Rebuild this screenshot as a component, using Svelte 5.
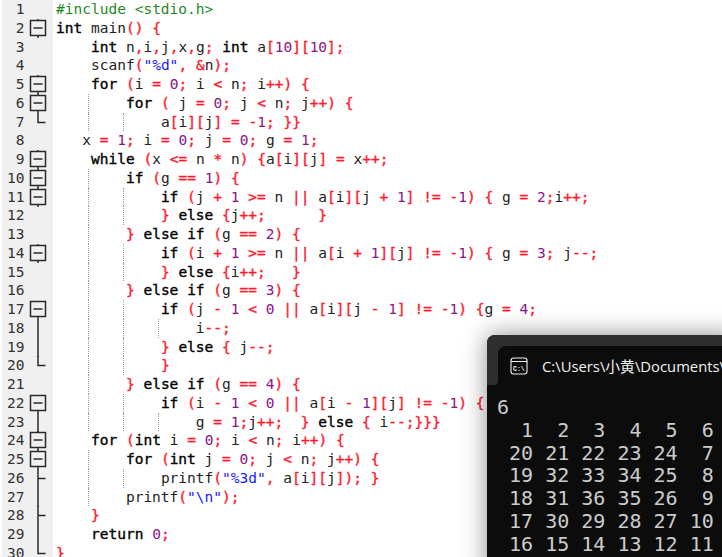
<script lang="ts">
	// source rows: [indent, code, fold, guide columns]
	const source: [number, string, string, number[]][] = [
		[0, '#include <stdio.h>', '', []],
		[0, 'int main() {', 'box', []],
		[4, 'int n,i,j,x,g; int a[10][10];', '', []],
		[4, 'scanf("%d", &n);', '', []],
		[4, 'for (i = 0; i < n; i++) {', 'box', []],
		[8, 'for ( j = 0; j < n; j++) {', 'box', [4]],
		[12, 'a[i][j] = -1; }}', 'end', [4, 8]],
		[3, 'x = 1; i = 0; j = 0; g = 1;', '', []],
		[4, 'while (x <= n * n) {a[i][j] = x++;', 'box', []],
		[8, 'if (g == 1) {', 'box', [4]],
		[12, 'if (j + 1 >= n || a[i][j + 1] != -1) { g = 2;i++;', 'box', [4, 8]],
		[12, '} else {j++;      }', '', [4, 8]],
		[8, '} else if (g == 2) {', '', [4]],
		[12, 'if (i + 1 >= n || a[i + 1][j] != -1) { g = 3; j--;', 'box', [4, 8]],
		[12, '} else {i++;   }', '', [4, 8]],
		[8, '} else if (g == 3) {', '', [4]],
		[12, 'if (j - 1 < 0 || a[i][j - 1] != -1) {g = 4;', 'open', [4, 8]],
		[16, 'i--;', 'line', [4, 8, 12]],
		[12, '} else { j--;', 'line', [4, 8]],
		[12, '}', 'end', [4, 8]],
		[8, '} else if (g == 4) {', '', [4]],
		[12, 'if (i - 1 < 0 || a[i - 1][j] != -1) {', 'open', [4, 8]],
		[16, 'g = 1;j++;  } else { i--;}}}', 'line', [4, 8, 12]],
		[4, 'for (int i = 0; i < n; i++) {', 'box', []],
		[8, 'for (int j = 0; j < n; j++) {', 'box', [4]],
		[12, 'printf("%3d", a[i][j]); }', 'tick', [4, 8]],
		[8, 'printf("\\n");', 'line', [4]],
		[4, '}', 'tick', []],
		[4, 'return 0;', 'line', []],
		[0, '}', 'end', []]
	];

	const charWidth = 8.74;
	const tokenRe = /#include.*|"[^"]*"|\d+|[A-Za-z_]\w*|\s+|./g;
	const keywords = ['int', 'for', 'if', 'else', 'while', 'return'];

	function kind(t: string) {
		if (t.startsWith('#')) return 'inc';
		if (t.startsWith('"')) return 'str';
		if (/^\d/.test(t)) return 'digit';
		if (keywords.includes(t)) return 'kw';
		if (/^[A-Za-z_]/.test(t)) return 'id';
		if (/^\s/.test(t)) return 'sp';
		return 'op';
	}

	const rows = source.map(([indent, code, fold, guides], i) => ({
		n: i + 1,
		indent,
		fold,
		guides,
		tokens: (code.match(tokenRe) ?? []).map((t) => ({ t, k: kind(t) }))
	}));

	const output = [
		'6',
		'  1  2  3  4  5  6',
		' 20 21 22 23 24  7',
		' 19 32 33 34 25  8',
		' 18 31 36 35 26  9',
		' 17 30 29 28 27 10',
		' 16 15 14 13 12 11'
	];
</script>

<main>
	<div class="editor">
		{#each rows as row}
			<div class="row">
				<span class="num">{row.n}</span>
				<svg class="fold" width="24" height="19" viewBox="0 0 24 19">
					{#if row.fold === 'box' || row.fold === 'open'}
						{#if row.fold === 'box'}
							<path d="M12 0V1.5" />
						{/if}
						<rect x="4.5" y="1.5" width="15" height="15" />
						<path d="M7.5 9H16.5M12 16.5V19" />
					{:else if row.fold === 'line'}
						<path d="M12 0V19" />
					{:else if row.fold === 'tick'}
						<path d="M12 0V19M12 9.5H19.5" />
					{:else if row.fold === 'end'}
						<path d="M12 0V9.5H19.5" />
					{/if}
				</svg>
				<div class="line">
					{#each row.guides as g}
						<i class="guide" style="left: {g * charWidth - 2.5}px"></i>
					{/each}
					<code class="text" style="padding-left: {row.indent * charWidth}px">{#each row.tokens as tok}<span class={tok.k}>{tok.t}</span>{/each}</code>
				</div>
			</div>
		{/each}
	</div>

	<section class="terminal">
		<header>
			<div class="tab">
				<svg width="18" height="18" viewBox="0 0 18 18">
					<rect x="1" y="1" width="16" height="16" rx="2.5" />
					<path d="M1 4.5H17" />
					<text x="3" y="13.5">C:\</text>
				</svg>
				<span class="title">C:\Users\小黄\Documents\</span>
			</div>
		</header>
		<pre>{output.join('\n')}</pre>
	</section>
</main>

<style>
	:global(body) {
		margin: 0;
		background: #fff;
	}

	main {
		position: relative;
		width: 722px;
		height: 557px;
		overflow: hidden;
		background: #fff;
	}

	.editor {
		display: flex;
		flex-direction: column;
		margin-left: 2px;
		background: linear-gradient(to right, #f0f0f0 51px, #fff 51px);
		height: 100%;
	}

	.row {
		display: flex;
		flex: none;
		height: 18.75px;
		font: 14.52px/18.75px 'DejaVu Sans Mono', monospace;
	}

	.num {
		width: 22.5px;
		text-align: right;
		color: #333;
	}

	.fold {
		flex: none;
		margin-left: 1px;
		margin-right: 6.5px;
		fill: none;
		stroke: #2a2a2a;
		stroke-width: 1.5;
	}

	.line {
		position: relative;
		flex: 1;
	}

	.text {
		display: block;
		font: inherit;
		white-space: pre;
	}

	.guide {
		position: absolute;
		top: 0;
		bottom: 0;
		border-left: 1px dotted #9a9a9a;
	}

	.kw {
		color: #000;
		-webkit-text-stroke: 0.35px #000;
	}

	.id {
		color: #222;
	}

	.op {
		color: #ff1a2e;
		-webkit-text-stroke: 0.35px #ff1a2e;
	}

	.digit {
		color: #8a148a;
	}

	.str {
		color: #1a1aff;
	}

	.inc {
		color: #1f8a1f;
	}

	.terminal {
		position: absolute;
		left: 487px;
		top: 335px;
		right: -20px;
		bottom: -20px;
		background: #0c0c0c;
		border-radius: 8px 8px 0 0;
		box-shadow: 0 0 24px rgba(0, 0, 0, 0.45);
		overflow: hidden;
	}

	header {
		position: relative;
		background: #2e2e2e;
		padding: 11px 0 0 11px;
	}

	/* small curve where the tab strip meets the console */
	header::after {
		content: '';
		position: absolute;
		left: 7px;
		bottom: 0;
		width: 4px;
		height: 4px;
		background: radial-gradient(circle at 0 0, #2e2e2e 3.5px, #0c0c0c 4.5px);
	}

	.tab {
		display: flex;
		align-items: center;
		gap: 14px;
		height: 39px;
		padding-left: 12px;
		background: #0c0c0c;
		border-radius: 8px 8px 0 0;
		color: #f2f2f2;
	}

	.tab svg {
		flex: none;
		fill: none;
		stroke: #f2f2f2;
		stroke-width: 1.1;
	}

	.tab text {
		fill: #f2f2f2;
		stroke: none;
		font: 700 6.5px 'Liberation Mono', monospace;
	}

	.title {
		font: 14.8px 'Open Sans', 'Noto Sans CJK SC', sans-serif;
		white-space: nowrap;
	}

	pre {
		margin: 11px 0 0 10px;
		color: #cccccc;
		font: 20px/22.75px 'DejaVu Sans Mono', monospace;
	}
</style>
